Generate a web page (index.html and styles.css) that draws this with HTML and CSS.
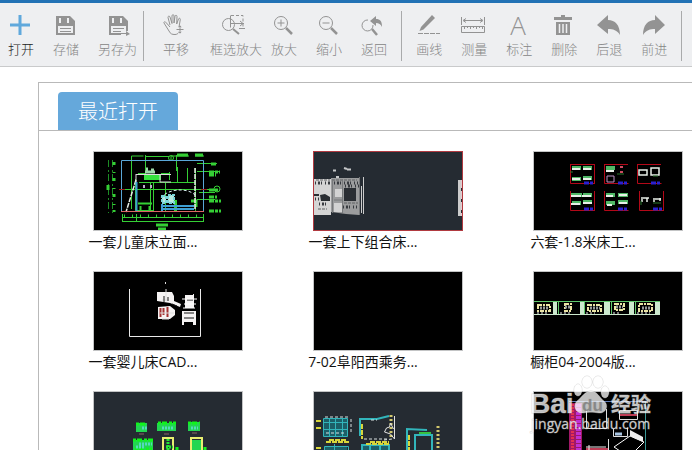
FILE: index.html
```html
<!DOCTYPE html>
<html lang="zh-CN">
<head>
<meta charset="utf-8">
<title>最近打开</title>
<link rel="stylesheet" href="styles.css">
</head>
<body>
<header class="toolbar">
  <div class="group group-file">
    <button class="tool active" type="button"><svg class="icon" viewBox="0 0 26 22"><path d="M2 11h20M12 1v20" stroke="#5fa8dc" stroke-width="3"/></svg>打开</button>
    <button class="tool" type="button"><svg class="icon" viewBox="0 0 26 22"><path fill="#939393" d="M3 2h14l5 5v14H3z"/><path fill="#eeeff1" d="M6 4h2v5H6zM14 4h2v5h-2zM5 12h15v7H5z"/><path fill="#939393" d="M7 14h11v1H7zM7 17h11v1H7z"/></svg>存储</button>
    <button class="tool" type="button"><svg class="icon" viewBox="0 0 26 22"><path fill="#939393" d="M4 2h14l5 5v14H4z"/><path fill="#eeeff1" d="M7 4h2v5H7zM15 4h2v5h-2zM6 12h15v5h3v5h-8v-3H6z"/><path fill="#939393" d="M8 14h11v1H8zM8 17h8v1H8zM16 19h5v-2l4 3-4 2v-2h-5z"/></svg>另存为</button>
  </div>
  <div class="group group-view">
    <button class="tool" type="button"><svg class="icon line" viewBox="0 0 26 22"><path d="M7 13L3 8.500c-1-1.500-2.500-.5-2 .5l5 8c1.500 3 3 3.500 6 3.500 2 0 3-1 3.500-2M7 11L5 3.500C4.800 2 6.500 1.500 7 3l2 6.500V1.800c0-1.500 2-1.500 2 0V9l1-6.700c.2-1.500 2-1.300 2 .2L13.700 10l1.800-5c.5-1.300 2-.8 1.800.5L16 13"/><path d="M17 12v7M13.500 15.500h7M15.800 13.200l1.200-1.400 1.200 1.400M15.800 17.800l1.200 1.400 1.200-1.400"/></svg>平移</button>
    <button class="tool tool-wide" type="button"><svg class="icon line" viewBox="0 0 26 22"><circle cx="5.500" cy="10.500" r="6"/><path d="M10 15l6 5" stroke-width="2"/><path d="M8 1.500h12v11" stroke-dasharray="3 2"/><path d="M7.500 1.500v12M8 9.500h13M16 14.500h6M17 7l3 2.500-3 2.500"/></svg>框选放大</button>
    <button class="tool" type="button"><svg class="icon line" viewBox="0 0 26 22"><circle cx="10" cy="9" r="6.500"/><path d="M6.500 9h7M10 5.500v7"/><path d="M15 14l6 6" stroke-width="2.500"/></svg>放大</button>
    <button class="tool" type="button"><svg class="icon line" viewBox="0 0 26 22"><circle cx="10" cy="9" r="6.500"/><path d="M6.500 9h7"/><path d="M15 14l6 6" stroke-width="2.500"/></svg>缩小</button>
    <button class="tool" type="button"><svg class="icon line" viewBox="0 0 26 22"><path d="M7 6a5.500 5.500 0 1 0 5 5"/><path d="M11 15l5 6" stroke-width="2.500"/><path d="M9 7l6-5v3c4 0 6 2 6 8-1.500-3-3-4-6-4v3z" fill="#939393" stroke="none"/></svg>返回</button>
  </div>
  <div class="group group-edit">
    <button class="tool" type="button"><svg class="icon" viewBox="0 0 26 22"><path fill="#939393" d="M16 1l3 3L7.500 15.500l-4 1.500L5 13z"/><path d="M2 19.500h22" stroke="#939393" stroke-dasharray="5 1"/></svg>画线</button>
    <button class="tool" type="button"><svg class="icon line" viewBox="0 0 26 22"><path d="M.5 3v8M23.500 3v8M3 6.500h18M5 4.500l-3 2 3 2M19 4.500l3 2-3 2M.5 12.500h23v6H.5zM3.500 12v3M6.500 12v2M9.500 12v3M12.500 12v2M15.500 12v3M18.500 12v2M21.500 12v3"/></svg>测量</button>
    <button class="tool" type="button"><svg class="icon" viewBox="0 0 26 22"><text class="letter" x="12" y="21" text-anchor="middle">A</text></svg>标注</button>
    <button class="tool" type="button"><svg class="icon" viewBox="0 0 26 22"><path fill="#939393" d="M3 3h7V1h4v2h7v3H3zM5 8h14v13H5z"/><path d="M8.500 10v9M12 10v9M15.500 10v9" stroke="#eeeff1" stroke-width="1.500"/></svg>删除</button>
    <button class="tool" type="button"><svg class="icon" viewBox="0 0 26 22"><path fill="#939393" d="M1 11L12 1v5c7 0 12 5 12 15-3-5-7-6-12-6v5z"/></svg>后退</button>
    <button class="tool" type="button"><svg class="icon" viewBox="0 0 26 22"><path fill="#939393" d="M24 11L14 1v5C7 6 2 11 2 21c3-5 7-6 12-6v5z"/></svg>前进</button>
  </div>
</header>
<main class="content">
  <section class="panel">
    <div class="tabs"><h1 class="tab">最近打开</h1></div>
    <div class="files">
      <figure class="file">
        <svg class="thumb thumb-black" viewBox="0 0 148 78">
          <g fill="none" stroke="#35cf35">
            <path d="M14.500 8v53M18.500 8v53" stroke-dasharray="7 3 2 2" stroke="#1d8d25"/>
            <path d="M20 10v50" stroke-width="3" stroke-dasharray="3 7 1 5"/>
            <path d="M37.500 57V4h12M51.500 24V3M51.500 4.500h24M82.500 3v16M77 8V4h18M101 4h9M103 11.500h20M103 19.500h23M105 40.500h16M103 47.500h18"/>
            <path d="M27 37.500h96M45 30.500h57M41.500 27v32M59.500 31v28M56.500 31v28M83.500 15v15M93.500 16v14M101.500 16v44M75.500 20v8M71.500 31v28"/>
            <path d="M28 65.500h82M28 69.500h82M28.500 62v8M42.500 62v8M109.500 62v8"/><path d="M30 64h78" stroke-width="3" stroke-dasharray="1 7"/>
            <path d="M115 20h11M115 23h7M115 38h10M115 45h8M115 49h12M115 59h12M117 12h6" stroke-width="3" stroke-dasharray="5 1 3 1"/>
            <path d="M62 73h12M64 77h8M83 3h11M101 3h8" stroke-width="3"/>
            <circle cx="77" cy="6" r="2.500"/><circle cx="123" cy="37" r="3"/><path d="M14 33v5" stroke-width="3"/>
            <path d="M44 51.500h14M46.500 54v4M55.500 54v4M43 59h16M44 22h8M67 22h9" stroke-width="2"/>
            <path d="M81.500 48v11M97 49h5v6" stroke-width="3"/>
          </g>
          <path d="M27.500 8.500h82v51h-82z" fill="none" stroke="#5aa7d8"/>
          <path fill="#35e33e" d="M50 22h17v6H50z"/><path d="M42 22.500h35M42 22v9M66 23v7h11" stroke="#ddd" fill="none"/>
          <path d="M51 20h10M52 17h2M57 18h3" stroke="#9ed9a9" stroke-width="3"/>
          <path d="M42 28L32 60M101 16v42" stroke="#e7eee7" stroke-width="1.500" stroke-dasharray="5 1"/>
          <path d="M42.500 30v29M68 52v8M68 54h32M69 57h31" stroke="#3e9fd3" stroke-width="2"/>
          <path d="M27 59.500h83" stroke="#dc6565"/><path d="M67 46c6-9 26-11 34-3" fill="none" stroke="#d9eeee" stroke-dasharray="3 2"/>
          <path d="M68 44h4v7h-4zM74 43h6v8h-6z" fill="#b8e9df" stroke="#7bd5d8" stroke-width="2" stroke-dasharray="3 1"/>
          <path d="M25 37.500h6M107 37.500h6" stroke="#9e2525"/><path d="M50 33v3M57 33v3" stroke="#bac" stroke-width="2"/>
        </svg>
        <figcaption>一套儿童床立面...</figcaption>
      </figure>
      <figure class="file">
        <svg class="thumb thumb-selected" viewBox="0 0 148 78">
          <path fill="#d4d4d4" d="M0 27h17v36H0z"/><path fill="#9b9c9d" d="M17 26h28v37l-13-1-15-2z"/>
          <path fill="#2a2e33" d="M30 36h12v13H30zM6 43l5-1 5 3v4H7zM0 42h5v2H0z"/><path fill="#d3d3d3" d="M21 37h7v8h-7zM20 51h8v9h-8z"/>
          <path d="M1 31h15M20 31h24M31 34h14M5 52h9M29 55h14M1 47h4" stroke="#383b40" stroke-width="3" stroke-dasharray="1 2 2 1 1 3"/>
          <path d="M2 28h14M18 28h25M30 51h14M4 57h9" stroke="#606365" stroke-dasharray="3 1"/>
          <path d="M18.500 27v34M28.500 27v34M45.500 25v38M20 48h9" stroke="#77797b"/>
          <path d="M47.500 34v27M49.500 25v37" stroke="#ccc"/><path d="M19 18.500h3M30 16l3 1M33 17.500h4M22 25h3" stroke="#c5c7c8" stroke-width="2"/>
          <path fill="#ccc" d="M144 28h3v36h-3z"/><path d="M147.500 28v36" stroke="#e4cbd0" stroke-dasharray="8 3"/>
        </svg>
        <figcaption>一套上下组合床...</figcaption>
      </figure>
      <figure class="file">
        <svg class="thumb thumb-black" viewBox="0 0 148 78">
          <g fill="none" stroke="#b30818"><path d="M36 12.500h24M36.500 12v19.500h24M60.500 12v20M70 12.500h24M70.500 12v19.500h24M103 12.500h24M103.500 12v19.500h24M36.500 39v19.500h24M60.500 39v20M70.500 39v19.500h24M105.500 39v19.500h24M129.500 39v20"/></g>
          <g stroke="#2b20cf" stroke-width="3" stroke-dasharray="5 1 3 1"><path d="M50 31h10M84 31h10M117 31h10M50 57h10M84 57h10M119 57h10"/></g>
          <g stroke="#50b866" stroke-width="4"><path d="M38 16h9M49 16h9M72 16h9M38 27h9M49 26h9M37 43h11M49 43h9M38 51h9M49 50h9M72 43h9M84 43h10M72 51h9M84 50h10"/></g>
          <g stroke="#e9f0e9" stroke-width="2" fill="none"><path d="M38 17h8M49 17h8M72 19h8M38 27h8M49 27h8M37 44h10M48 44h9M37 52h9M49 51h9M72 44h7M85 43h8M73 53h5M85 51h8"/><path d="M105 18h8v5h-8zM117 16h8v7h-8zM107 46h8M119 47h8M108 47v3M113 46v4M120 48v2M126 46v3" stroke-width="1.500"/></g>
          <path d="M73 24h7v6h-7z" fill="none" stroke="#bd91c5"/><path d="M86 15h3M86 20h3" stroke="#ce4b62" stroke-width="2"/><path d="M36 20h3M83 22h7M119 24h5M107 49v4M119 51h8" stroke="#28762d"/>
        </svg>
        <figcaption>六套-1.8米床工...</figcaption>
      </figure>
      <figure class="file">
        <svg class="thumb thumb-black" viewBox="0 0 148 78">
          <path d="M35.500 17v47.500h71V17" fill="none" stroke="#e9e9e9"/>
          <path fill="#f5f3f3" d="M63 20h15l2 4v5l7 3-1 3-10-4-13-2zM64 35l12-1 5 4v5l-5 4H64zM91 23h8v-1h1v14h-9zM88 39h14v14h-3v-3h-9v3h-2z"/>
          <path d="M66.500 36v9M69.500 36v7M73.500 35v10" stroke="#a33131" stroke-width="2"/><path d="M66 41h14M68 47h7M68 28h7M72 17v12M71.500 10v2" stroke="#ddd"/>
          <path d="M70 24v6M74 25v4M78 32l5 2M90 41h10M90 46h10M93 28h6" stroke="#171717"/><path d="M88 27h15M90 32h12M89 36h12" stroke="#fff"/>
        </svg>
        <figcaption>一套婴儿床CAD...</figcaption>
      </figure>
      <figure class="file">
        <svg class="thumb thumb-black" viewBox="0 0 148 78"></svg>
        <figcaption>7-02阜阳西乘务...</figcaption>
      </figure>
      <figure class="file">
        <svg class="thumb thumb-black" viewBox="0 0 148 78">
          <path fill="#cce8cd" d="M0 42h126v1H0zM19 30h4v12h-4zM46 30h4v12h-4zM70 30h6v12h-6zM95 30h5v12h-5zM121 30h5v12h-5z"/>
          <path d="M0 29.500h126M24.500 30v12M50.500 30v12M77.500 30v12M101.500 30v12" stroke="#60c66b"/>
          <path d="M4 33h12v6H4zM31 32h6v7h-6zM54 33h13v6H54zM81 32h9v6h-9zM105 32h13v7h-13z" fill="none" stroke="#ebe5a5" stroke-width="2" stroke-dasharray="4 1 2 1"/>
          <path d="M6 36h8M31 35h5M56 36h10M82 35h7M108 36h8" stroke="#989b9b" stroke-width="3" stroke-dasharray="2 1"/>
          <path d="M3 41h10M26 41h10M52 41h9M79 41h7M103 41h13" stroke="#eee" stroke-dasharray="2 2"/>
        </svg>
        <figcaption>橱柜04-2004版...</figcaption>
      </figure>
      <figure class="file">
        <svg class="thumb" viewBox="0 0 148 78">
          <g fill="#22d651"><path d="M42 31h11v9H42zM63 31h19v8H63zM94 30h12v9H94zM39 48h20v10H39zM98 48h10v11H98zM39 62h20v12H39z"/></g>
          <g stroke="#10f51b" stroke-width="3" stroke-dasharray="3 1 5 2"><path d="M42 32h10M64 31h18M94 31h12M39 48h20M41 57h17M83 55v6M111 55v6"/></g>
          <path d="M48 36h5M68 36h12M97 36h7M45 52h13M42 55h9" stroke="#55d9bc" stroke-width="3" stroke-dasharray="2 1"/>
          <path d="M69 60V46h10v14M97 60V46h11v14" fill="none" stroke="#e8ef70" stroke-width="2"/><path d="M74 47v13M72 55h7" stroke="#22e733" stroke-width="3" stroke-dasharray="2 1"/><path d="M45 42h5M70 42h5M98 41h5" stroke="#866"/>
        </svg>
      </figure>
      <figure class="file">
        <svg class="thumb" viewBox="0 0 148 78">
          <g fill="#1c5f68"><path d="M10 26h24v18H10zM11 54h22v20H11zM49 53h25v8H49z"/></g>
          <g fill="none" stroke="#32b5bb"><path d="M9.500 26.500h24v18h-24zM9 30.500h25M9 37.500h25M15.500 26v18M21.500 26v18M28.500 26v18M10.500 54.500h24v20h-24zM10 59.500h24M20.500 52v20"/><path d="M46 44V27h17l12-3M93 60V37l20 1M101 58V43h17v17M48 61v-8h27v8M56 53v8M66 53v8" stroke-width="2"/></g>
          <path d="M2 29h6M2 36h6M15 48h17M12 50h23M56 50h19M52 52h24M48 32v15M95 43v17M2 56h6" stroke="#d8d63a" stroke-width="2" stroke-dasharray="5 1"/>
          <path d="M77 23v24M124 34v26" stroke="#d1c76c" stroke-width="3" stroke-dasharray="2 2"/><path d="M11 25h23M12 41h20M37 27v15M70 48l8-1M57 28h6M50 47h24" stroke="#d9e1e0" stroke-dasharray="3 2"/>
          <path d="M80.500 24v23l-4-5-6-2 2-4 3-1 1-4 3 6" fill="none" stroke="#e2e2e2"/><path d="M105 41h12" stroke="#36c341" stroke-width="2"/>
        </svg>
      </figure>
      <figure class="file">
        <svg class="thumb thumb-black" viewBox="0 0 148 78">
          <path fill="#a01867" d="M35 11h13v67H35z"/><path d="M38.500 12v66" stroke="#e33052" stroke-width="3" stroke-dasharray="2 1"/><path d="M44.500 12v66" stroke="#c030d5" stroke-width="5" stroke-dasharray="3 1"/>
          <path d="M35 9.500h77" stroke="#637fb8"/><path d="M111.500 10v68" stroke="#3a9897"/>
          <path d="M52.500 17v19.500h20V17M79.500 37v7.500h14v-9M85.500 18.500h18v9h-18zM74.500 47v12" fill="none" stroke="#e0e0e0"/>
          <path d="M52 57h22M86 23h17" stroke="#bd3c55" stroke-width="2"/><path d="M55 53v5M50 60h14M52 55h20" stroke="#eee"/>
          <path d="M80 55l16-11 14 6-15 15z" fill="none" stroke="#fff"/><path d="M96 38l13 7v5l-13-6z" fill="#eee"/><path d="M81 42h7" stroke="#aac6e4" stroke-width="3"/>
        </svg>
      </figure>
    </div>
  </section>
</main>
<div class="watermark" aria-hidden="true">
  <svg viewBox="0 0 130 62">
    <g class="mark-paw"><ellipse cx="48" cy="16" rx="4" ry="6"/><ellipse cx="57" cy="8" rx="5" ry="6"/><ellipse cx="68" cy="8" rx="5" ry="6"/><ellipse cx="75" cy="18" rx="4" ry="6"/><path d="M61 17c6 0 8 6 13 10 6 5 1 13-5 12-6-1-10-1-16 0-7 1-11-7-6-12 5-4 8-10 14-10z"/></g>
    <text class="mark-brand" x="0" y="39">Bai</text><text class="mark-du" x="52" y="37">du</text><text class="mark-cjk" x="81" y="38">经验</text>
    <text class="mark-url" x="1" y="55">jingyan.baidu.com</text>
  </svg>
</div>
</body>
</html>
```
FILE: styles.css
```css
* {
  box-sizing: border-box;
}

body {
  margin: 0;
  height: 100vh;
  display: flex;
  flex-direction: column;
  overflow: hidden;
  position: relative;
  background: #fff;
  color: #111;
  font-family: "Open Sans", "Noto Sans CJK SC", sans-serif;
}

.toolbar {
  display: flex;
  flex: none;
  padding: 8px 0 5px;
  border-top: 3px solid #2272b5;
  border-bottom: 1px solid #c9cacb;
  background: #eeeff1;
}

.group {
  display: flex;
  gap: 19px;
  height: 50px;
  border-right: 1px solid #a9aaab;
}

.group-file {
  padding: 0 6px 0 8px;
}

.group-view {
  padding: 0 14px 0 19px;
}

.group-edit {
  padding: 0 14px;
}

.tool {
  display: flex;
  flex: none;
  flex-direction: column;
  align-items: center;
  gap: 3px;
  padding: 3px 0 0;
  border: 0;
  background: none;
  color: #858585;
  font-family: "Noto Sans CJK SC", sans-serif;
  font-size: 13px;
  font-weight: 300;
  line-height: 20px;
  white-space: nowrap;
}

.active {
  color: #222;
}

.tool-wide {
  margin: 0 -10px 0 2px;
}

.icon {
  display: block;
  flex: none;
  width: 26px;
  height: 22px;
  overflow: visible;
}

.line {
  fill: none;
  stroke: #939393;
}

.letter {
  fill: #939393;
  font-family: "Open Sans", sans-serif;
  font-size: 26px;
}

.content {
  flex: 1;
  min-height: 0;
  padding: 15px 0 0 38px;
  overflow: hidden;
}

.panel {
  padding-top: 9px;
  border-top: 1px solid #b9b9b9;
  border-left: 1px solid #b9b9b9;
}

.tabs {
  display: flex;
  padding-left: 19px;
  border-bottom: 1px solid #b9b9b9;
}

.tab {
  margin: 0;
  padding: 0 20px;
  border-radius: 4px 4px 0 0;
  background: #65a8db;
  color: #fff;
  font-family: "Noto Sans CJK SC", sans-serif;
  font-size: 20px;
  font-weight: 300;
  line-height: 38px;
}

.files {
  display: grid;
  grid-template-columns: repeat(auto-fill, 155px);
  gap: 18px 65px;
  padding: 20px 0 20px 49px;
}

.file {
  margin: 0;
}

.thumb {
  display: block;
  width: 150px;
  height: 80px;
  margin-left: 5px;
  border: 1px solid #c3c4c5;
  background: #252b32;
}

.thumb-selected {
  border-color: #b13a40;
}

.thumb-black {
  background: #000;
}

figcaption {
  display: flex;
  justify-content: center;
  width: 110px;
  font-size: 14px;
  line-height: 22px;
  white-space: nowrap;
}

.watermark {
  position: absolute;
  right: 32px;
  bottom: 14px;
  width: 130px;
}

.watermark svg {
  display: block;
  overflow: visible;
  fill: #fff;
  fill-opacity: 0.75;
  stroke: #aaa;
  stroke-opacity: 0.4;
  stroke-width: 1px;
  paint-order: stroke;
}

.mark-brand,
.mark-du {
  font-family: "Liberation Sans", sans-serif;
}

.mark-brand {
  font-size: 28px;
  font-weight: 700;
}

.mark-du {
  fill: #777;
  font-size: 17px;
  font-weight: 700;
}

.mark-cjk {
  font-family: "Noto Sans CJK SC", sans-serif;
  font-size: 20px;
  font-weight: 700;
}

.mark-url {
  font-size: 14px;
}
```
